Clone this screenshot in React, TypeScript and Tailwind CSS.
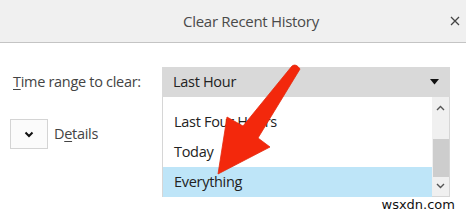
import React from "react";

export default function App() {
  return (
    <div
      className="relative w-[466px] h-[215px] overflow-hidden bg-white text-[#333] tracking-[-0.3px]"
      style={{ fontFamily: '"Open Sans", "Noto Sans", sans-serif' }}
    >
      {/* Title bar */}
      <header className="relative h-[43px] bg-[#f0f0f0] border-b border-[#c4c4c4] flex items-center justify-center">
        <span className="text-[15px] text-[#4a4a4a] pl-[36px]">Clear Recent History</span>
        <svg className="absolute right-[6px] top-[16px]" width="10" height="10" viewBox="0 0 10 10">
          <path d="M1 1 L9 9 M9 1 L1 9" stroke="#444" strokeWidth="1.3" />
        </svg>
      </header>

      {/* Body */}
      <main className="pt-[24px]">
        <div className="flex items-center">
          <label className="w-[162px] pl-[13px] text-[14.5px] text-[#444]">
            <span className="underline underline-offset-2">T</span>ime range to clear:
          </label>

          <div className="relative w-[288px] h-[30px] bg-[#d9d9d9] flex items-center justify-between pl-[11px] pr-[11px]">
            <span className="text-[14.5px] text-[#222]">Last Hour</span>
            <svg width="9" height="6" viewBox="0 0 9 6">
              <path d="M0 0 L9 0 L4.5 5.5 Z" fill="#111" />
            </svg>

            {/* Open dropdown list */}
            <div className="absolute left-0 top-full w-[288px] h-[100px] bg-white border border-t-0 border-[#d6d6d6] flex z-10">
              <ul className="flex-1 pt-[10px] text-[14.5px] text-[#222]">
                <li className="h-[30px] flex items-center pl-[11px]">Last Four Hours</li>
                <li className="h-[30px] flex items-center pl-[11px]">Today</li>
                <li className="h-[30px] flex items-center pl-[11px] bg-[#bee5f8]">Everything</li>
              </ul>
              <div className="w-[17px] bg-[#f0f0f0] flex flex-col items-center">
                <svg className="mt-[8px]" width="9" height="6" viewBox="0 0 9 6">
                  <path d="M1 5 L4.5 1.5 L8 5" stroke="#555" strokeWidth="1.4" fill="none" />
                </svg>
                <div className="mt-[28px] w-[16px] h-[38px] bg-[#cdcdcd]" />
                <svg className="mt-[6px]" width="9" height="6" viewBox="0 0 9 6">
                  <path d="M1 1 L4.5 4.5 L8 1" stroke="#555" strokeWidth="1.4" fill="none" />
                </svg>
              </div>
            </div>
          </div>
        </div>

        <div className="mt-[22px] pl-[10px] flex items-center">
          <button className="w-[38px] h-[30px] border border-[#d4d4d4] bg-[#fbfbfb] flex items-center justify-center">
            <svg width="10" height="7" viewBox="0 0 10 7">
              <path d="M1.5 1.5 L5 5 L8.5 1.5" stroke="#111" strokeWidth="2" fill="none" />
            </svg>
          </button>
          <span className="ml-[6px] text-[14.5px] text-[#444]">
            D<span className="underline underline-offset-2">e</span>tails
          </span>
        </div>
      </main>

      {/* Red annotation arrow */}
      <svg className="absolute left-0 top-0 z-20 pointer-events-none" width="466" height="215" viewBox="0 0 466 215">
        <path
          d="M292 66 Q296 63 300 69 L258 138 L270 147 L218 174 L227 117 L243 126 Z"
          fill="#f3280c"
          stroke="#e52a0c"
          strokeWidth="0.8"
          strokeLinejoin="round"
        />
      </svg>

      {/* Watermark */}
      <span
        className="absolute right-[10px] bottom-[2px] z-20 text-[13px] text-[#111] bg-white px-[1px] leading-[16px] tracking-normal"
        style={{ fontFamily: '"DejaVu Sans", sans-serif' }}
      >
        wsxdn.com
      </span>
    </div>
  );
}
